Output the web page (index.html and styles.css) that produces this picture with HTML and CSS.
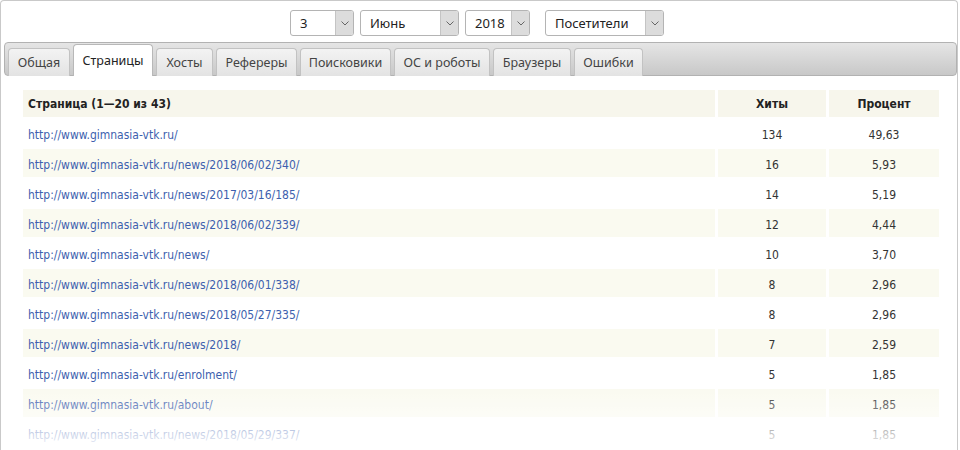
FILE: index.html
```html
<!DOCTYPE html>
<html lang="ru">
<head>
<meta charset="utf-8">
<title>Статистика</title>
<link rel="stylesheet" href="styles.css">
</head>
<body>
<div class="frame">
  <div class="filters">
    <div class="select s-day"><span class="val">3</span><span class="arrow"><svg width="8" height="5" viewBox="0 0 8 5"><path d="M0.5 0.5 L4 4 L7.5 0.5" fill="none" stroke="#666" stroke-width="1"/></svg></span></div>
    <div class="select s-month"><span class="val">Июнь</span><span class="arrow"><svg width="8" height="5" viewBox="0 0 8 5"><path d="M0.5 0.5 L4 4 L7.5 0.5" fill="none" stroke="#666" stroke-width="1"/></svg></span></div>
    <div class="select s-year"><span class="val">2018</span><span class="arrow"><svg width="8" height="5" viewBox="0 0 8 5"><path d="M0.5 0.5 L4 4 L7.5 0.5" fill="none" stroke="#666" stroke-width="1"/></svg></span></div>
    <div class="select s-type"><span class="val">Посетители</span><span class="arrow"><svg width="8" height="5" viewBox="0 0 8 5"><path d="M0.5 0.5 L4 4 L7.5 0.5" fill="none" stroke="#666" stroke-width="1"/></svg></span></div>
  </div>
  <div class="tabbar">
    <div class="tab t1">Общая</div>
    <div class="tab t2 active">Страницы</div>
    <div class="tab t3">Хосты</div>
    <div class="tab t4">Рефереры</div>
    <div class="tab t5">Поисковики</div>
    <div class="tab t6">ОС и роботы</div>
    <div class="tab t7">Браузеры</div>
    <div class="tab t8">Ошибки</div>
  </div>
  <div class="content">
    <table class="stats">
      <thead>
        <tr><th class="c-page">Страница (1—20 из 43)</th><th class="c-num">Хиты</th><th class="c-pct">Процент</th></tr>
      </thead>
      <tbody>
        <tr><td><a href="#">http://www.gimnasia-vtk.ru/</a></td><td class="num">134</td><td class="num">49,63</td></tr>
        <tr class="alt"><td><a href="#">http://www.gimnasia-vtk.ru/news/2018/06/02/340/</a></td><td class="num">16</td><td class="num">5,93</td></tr>
        <tr><td><a href="#">http://www.gimnasia-vtk.ru/news/2017/03/16/185/</a></td><td class="num">14</td><td class="num">5,19</td></tr>
        <tr class="alt"><td><a href="#">http://www.gimnasia-vtk.ru/news/2018/06/02/339/</a></td><td class="num">12</td><td class="num">4,44</td></tr>
        <tr><td><a href="#">http://www.gimnasia-vtk.ru/news/</a></td><td class="num">10</td><td class="num">3,70</td></tr>
        <tr class="alt"><td><a href="#">http://www.gimnasia-vtk.ru/news/2018/06/01/338/</a></td><td class="num">8</td><td class="num">2,96</td></tr>
        <tr><td><a href="#">http://www.gimnasia-vtk.ru/news/2018/05/27/335/</a></td><td class="num">8</td><td class="num">2,96</td></tr>
        <tr class="alt"><td><a href="#">http://www.gimnasia-vtk.ru/news/2018/</a></td><td class="num">7</td><td class="num">2,59</td></tr>
        <tr><td><a href="#">http://www.gimnasia-vtk.ru/enrolment/</a></td><td class="num">5</td><td class="num">1,85</td></tr>
        <tr class="alt"><td><a href="#">http://www.gimnasia-vtk.ru/about/</a></td><td class="num">5</td><td class="num">1,85</td></tr>
        <tr><td><a href="#">http://www.gimnasia-vtk.ru/news/2018/05/29/337/</a></td><td class="num">5</td><td class="num">1,85</td></tr>
      </tbody>
    </table>
  </div>
  <div class="fade"></div>
</div>
</body>
</html>
```
FILE: styles.css
```css
html, body {
  margin: 0;
  padding: 0;
  background: #fff;
  overflow: hidden;
}
body {
  width: 960px;
  height: 450px;
  font-family: "DejaVu Sans Condensed", "DejaVu Sans", sans-serif;
  font-stretch: condensed;
  font-size: 12px;
  color: #333;
}
.frame {
  position: relative;
  box-sizing: border-box;
  width: 958px;
  height: 450px;
  border: 1px solid #c9c9c9;
  border-bottom: none;
  border-radius: 4px 4px 0 0;
  padding: 9px 0 0 3px;
  overflow: hidden;
}
.filters {
  display: flex;
  height: 26px;
  padding-left: 286px;
}
.select {
  box-sizing: border-box;
  display: flex;
  height: 26px;
  border: 1px solid #b4b4b4;
  border-radius: 3px;
  background: #fff;
  margin-right: 6px;
  font-family: "Noto Sans", sans-serif;
  font-stretch: normal;
  font-size: 13px;
  color: #222;
}
.select .val {
  flex: 1;
  padding-left: 9px;
  line-height: 24px;
}
.select .arrow {
  width: 17px;
  display: flex;
  align-items: center;
  justify-content: center;
  background: #dcdcdc;
  border-left: 1px solid #c4c4c4;
  border-radius: 0 2px 2px 0;
}
.s-day { width: 64px; }
.s-month { width: 99px; }
.s-year { width: 65px; margin-right: 15px; }
.s-type { width: 119px; }

.tabbar {
  box-sizing: border-box;
  margin-top: 6px;
  width: 953px;
  height: 34px;
  border: 1px solid #b2b2b2;
  border-radius: 4px;
  background: linear-gradient(#e5e5e5, #c8c8c8);
  display: flex;
  align-items: flex-end;
  padding-left: 3px;
  gap: 3px;
}
.tab {
  box-sizing: border-box;
  height: 28px;
  border: 1px solid #c2c2c2;
  border-bottom: none;
  border-radius: 4px 4px 0 0;
  background: linear-gradient(#f3f3f3, #e3e3e3);
  font-family: "Noto Sans", sans-serif;
  font-stretch: normal;
  font-size: 12.5px;
  color: #444;
  line-height: 27px;
  text-align: center;
  margin-bottom: -1px;
}
.tab.active {
  height: 32px;
  background: #fff;
  border-color: #b8b8b8;
  line-height: 31px;
  color: #222;
  position: relative;
  z-index: 1;
}
.t1 { width: 62px; }
.t2 { width: 80px; }
.t3 { width: 57px; }
.t4 { width: 81px; }
.t5 { width: 91px; }
.t6 { width: 96px; }
.t7 { width: 78px; }
.t8 { width: 69px; }

.content {
  padding: 12px 0 0 16px;
}
.stats {
  border-collapse: separate;
  border-spacing: 3px 2px;
  table-layout: fixed;
  width: 922px;
}
.stats th, .stats td {
  padding: 0 0 0 5px;
  text-align: left;
  vertical-align: middle;
  white-space: nowrap;
}
.stats td {
  height: 24px;
  padding-top: 4px;
}
.stats th {
  height: 27px;
  background: #f7f6ec;
  font-weight: bold;
  color: #222;
}
.stats .c-page { width: 687px; }
.stats .c-num { width: 108px; text-align: center; padding: 0; }
.stats .c-pct { width: 110px; text-align: center; padding: 0; }
.stats td.num {
  text-align: center;
  padding: 4px 0 0 0;
  color: #333;
}
.stats tr.alt td {
  background: #fafaf0;
}
.stats a {
  color: #3d5fae;
  text-decoration: none;
}
.fade {
  position: absolute;
  left: 0;
  right: 0;
  top: 386px;
  height: 70px;
  background: linear-gradient(rgba(255,255,255,0), rgba(255,255,255,0.95) 62px, #fff);
  pointer-events: none;
  z-index: 2;
}
```
